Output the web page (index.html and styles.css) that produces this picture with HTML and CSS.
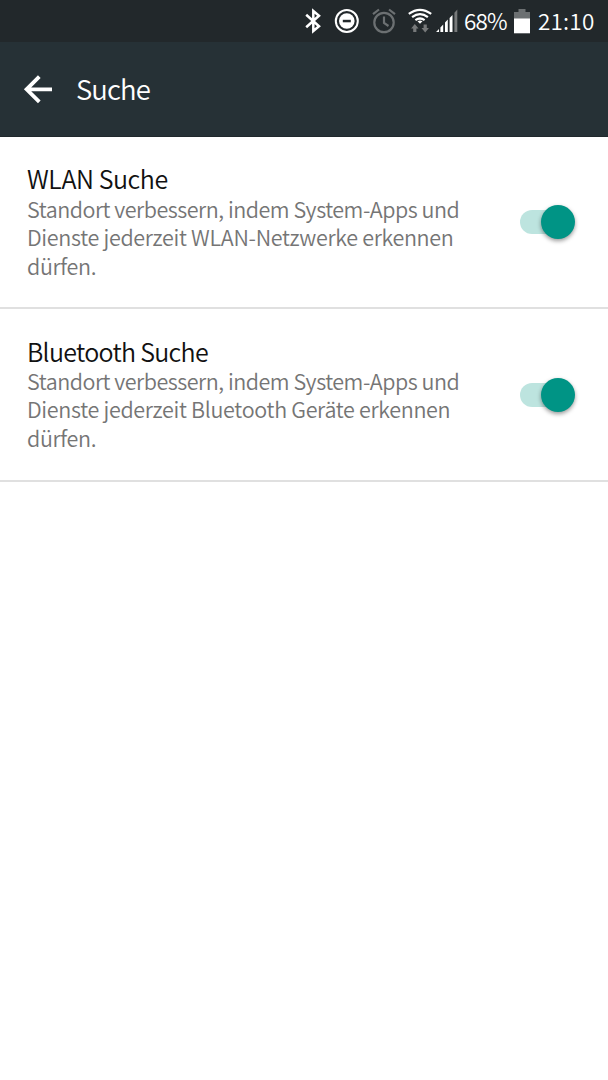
FILE: index.html
```html
<!DOCTYPE html>
<html lang="de">
<head>
  <meta charset="UTF-8">
  <meta name="viewport" content="width=device-width, initial-scale=1.0">
  <title>Suche</title>
  <link rel="stylesheet" href="styles.css">
</head>
<body>

  <!-- Status bar -->
  <div class="status-bar">
    <svg class="bluetooth" width="16" height="26" viewBox="0 0 16 26" fill="none" stroke="#fff" stroke-width="2.5">
      <path d="M1.2 6.8 L14 18.3 L8.3 23 V3 L14 7.7 L1.2 19.2"/>
    </svg>
    <svg class="dnd" width="26" height="26" viewBox="0 0 26 26">
      <circle cx="12.8" cy="13" r="11" fill="none" stroke="#fff" stroke-width="2"/>
      <circle cx="12.8" cy="13" r="7.8" fill="#fff"/>
      <rect x="8.8" y="11.8" width="8" height="2.5" fill="#22282b"/>
    </svg>
    <svg class="alarm" width="24" height="26" viewBox="0 0 24 26" fill="none" stroke="#6c7072" stroke-width="2.2">
      <circle cx="12" cy="14.5" r="9.7"/>
      <path d="M12 8.5 V15 L16.5 18 M1 6.2 L7 1.5 M23 6.2 L17 1.5"/>
    </svg>
    <svg class="wifi" width="24" height="26" viewBox="0 0 24 26" fill="none" stroke="#fff" stroke-width="2.2">
      <path d="M0.8 5.9 Q12 -2.3 23.2 5.9 M4.1 9.2 Q12 3.2 19.9 9.2 M7.4 12.2 Q12 8.8 16.6 12.2"/>
      <path d="M9.5 13.3 Q12 11.6 14.5 13.3 L12 15.8 Z" fill="#fff" stroke="none"/>
      <path d="M6.8 16 L10.5 20.4 H8.4 V24 H5.2 V20.4 H3.1 Z M17.2 24.5 L20.9 20.1 H18.8 V16.5 H15.6 V20.1 H13.5 Z" fill="#77797a" stroke="none"/>
    </svg>
    <svg class="signal" width="22" height="26" viewBox="0 0 22 26">
      <path d="M0 24 L3 21 V24 Z M4.4 19.5 L7.2 16.5 V24 H4.4 Z M9 14.5 L11.8 11.5 V24 H9 Z M13.6 10 L16.5 7 V24 H13.6 Z" fill="#fff"/>
      <path d="M18.4 4.7 L21.3 1.5 V24 H18.4 Z" fill="#77797a"/>
    </svg>
    <span class="percent">68%</span>
    <svg class="battery" width="16" height="26" viewBox="0 0 16 26">
      <path d="M0 4 H4.5 V1 H11.5 V4 H16 V11 H0 Z" fill="#6c7072"/>
      <rect y="10.5" width="16" height="14.8" fill="#fff"/>
    </svg>
    <span class="clock">21:10</span>
  </div>

  <!-- App bar -->
  <header class="app-bar">
    <svg class="back" width="30" height="30" viewBox="0 0 30 30" fill="none" stroke="#fff" stroke-width="3.8">
      <path d="M29 15.3 H4 M16.3 2.7 L3.6 15.3 L16.3 27.9"/>
    </svg>
    <h1>Suche</h1>
  </header>

  <!-- Settings -->
  <main>
    <div class="setting wlan">
      <div class="setting-text">
        <h2>WLAN Suche</h2>
        <p><span>Standort verbessern, indem System-Apps und</span><br>Dienste jederzeit WLAN-Netzwerke erkennen<br>dürfen.</p>
      </div>
      <div class="switch"><div class="thumb"></div></div>
    </div>
    <div class="setting bluetooth-scan">
      <div class="setting-text">
        <h2>Bluetooth Suche</h2>
        <p><span>Standort verbessern, indem System-Apps und</span><br>Dienste jederzeit Bluetooth Geräte erkennen<br>dürfen.</p>
      </div>
      <div class="switch"><div class="thumb"></div></div>
    </div>
  </main>

</body>
</html>
```
FILE: styles.css
```css
* {
  margin: 0;
  padding: 0;
  box-sizing: border-box;
}

body {
  background: #fff;
  font-family: 'Noto Sans CJK SC', 'Lato', sans-serif;
  font-weight: 350;
}

svg {
  display: block;
  flex: none;
}

.status-bar {
  display: flex;
  justify-content: flex-end;
  align-items: center;
  height: 42px;
  padding-right: 13px;
  background: #22282b;
  color: #fff;
  font-size: 22.5px;
  line-height: 40px;
}

.dnd { margin-left: 13px; }
.alarm { margin-left: 12px; }
.wifi { margin-left: 12px; }
.signal { margin-left: 4px; }

.percent {
  width: 43px;
  margin: -3px 0 0 6px;
  letter-spacing: -0.9px;
  white-space: nowrap;
}

.battery { margin-left: 7px; }

.clock {
  width: 57px;
  margin: -3px 0 0 8px;
  letter-spacing: 0.2px;
  white-space: nowrap;
}

.app-bar {
  display: flex;
  align-items: center;
  height: 95px;
  padding: 0 23px;
  background: #263136;
  border-bottom: 1px solid #20282c;
  color: #fff;
}

.app-bar h1 {
  margin: -2px 0 0 23px;
  font-size: 27.5px;
  font-weight: 350;
  letter-spacing: -0.9px;
}

.setting {
  display: flex;
  justify-content: space-between;
  align-items: center;
  height: 172.4px;
  padding: 0 33px 0 27px;
  border-bottom: 2px solid #e0e0e0;
}

.setting-text {
  margin-top: -1px;
  white-space: nowrap;
}

.setting h2 {
  margin-bottom: 1.4px;
  color: #111;
  font-size: 25px;
  font-weight: 350;
  line-height: 30px;
  letter-spacing: -0.45px;
}

.bluetooth-scan h2 {
  letter-spacing: -0.7px;
}

.setting p {
  color: #757575;
  font-size: 21.5px;
  line-height: 28.6px;
  letter-spacing: -0.32px;
}

.setting p span {
  letter-spacing: -0.48px;
}

.switch {
  display: flex;
  justify-content: flex-end;
  align-items: center;
  width: 55px;
  height: 24px;
  border-radius: 12px;
  background: linear-gradient(to right, #bde4df 40px, transparent 40px);
}

.thumb {
  width: 34px;
  height: 34px;
  flex: none;
  border-radius: 50%;
  background: #009485;
  box-shadow: 0 2px 4px rgba(0, 0, 0, 0.4);
}
```
